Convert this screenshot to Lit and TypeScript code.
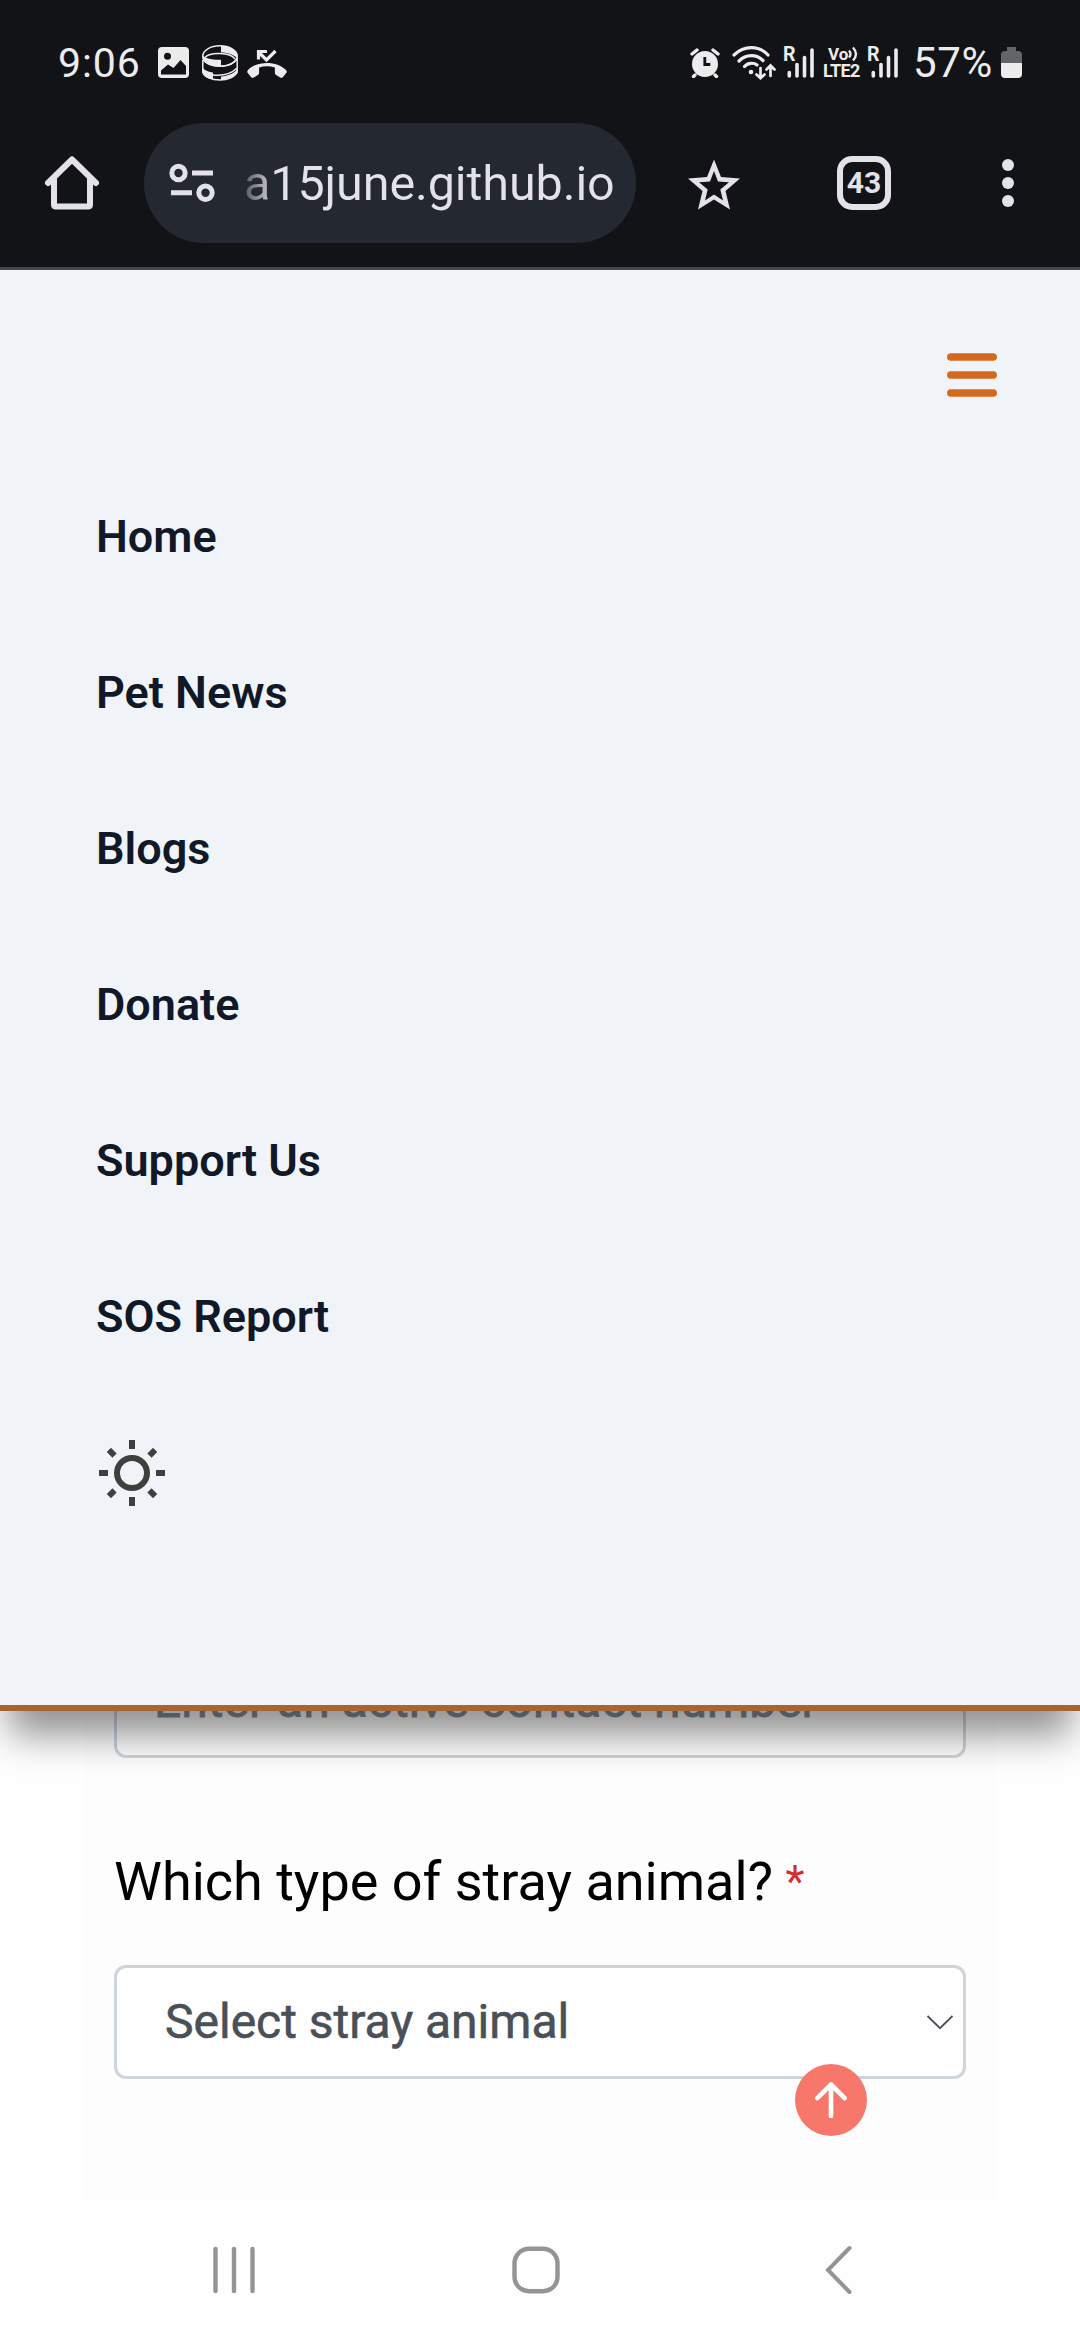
import { LitElement, html, css, svg } from "lit";
import { customElement } from "lit/decorators.js";

const signal = () => svg`
  <g stroke="#ececec" stroke-width="3.6" stroke-linecap="round">
    <path d="M5.3 25.500v3.500M13 17.500v11.500M20.500 10.500v18.500M28 3v26"/>
  </g>`;

@customElement("status-bar")
export class StatusBar extends LitElement {
  static styles = css`
    :host { display: flex; box-sizing: border-box; height: 99px; padding: 26px 58px 0 58px; align-items: center;
      justify-content: space-between; color: #ececec; font-family: Roboto, sans-serif; }
    svg { display: block; flex: none; }
    .side { display: flex; align-items: center; }
    .clock { font-size: 41px; line-height: 48px; width: 83px; letter-spacing: 0.9px; white-space: nowrap; }
    .picture { margin-left: 17px; }
    .ring { margin-left: 13px; }
    .missed { margin-left: 9px; }
    .wifi { margin-left: 12px; }
    .cell { position: relative; width: 30px; height: 32px; margin-left: 7px; }
    .roam { position: absolute; left: -1px; top: 0; font-size: 19.500px; line-height: 15px; font-weight: 700; }
    .volte { display: flex; flex-direction: column; width: 39px; margin-left: 9px; margin-right: -1px; font-weight: 700; }
    .vo { display: flex; font-size: 17px; line-height: 16px; padding-left: 5px; height: 16px; }
    .lte { font-size: 18px; line-height: 17px; letter-spacing: -0.7px; white-space: nowrap; }
    .percent { font-size: 42px; line-height: 48px; width: 82px; margin-left: 15px; margin-right: 1px; letter-spacing: 0.7px; white-space: nowrap; }
    .battery { margin-left: 5px; }
  `;
  render() {
    return html`
      <div class="side">
        <span class="clock">9:06</span>
        <svg class="picture" width="31" height="31" viewBox="0 0 31 31">
          <path fill="#ececec" fill-rule="evenodd" d="M4 0h23a4 4 0 0 1 4 4v23a4 4 0 0 1-4 4H4a4 4 0 0 1-4-4V4a4 4 0 0 1 4-4zM9.500 5.700a3.500 3.500 0 1 0 0 7a3.500 3.500 0 0 0 0-7zM3 23.500V27.500h25V19L22.500 13L15.500 21L10 17.500z"/>
        </svg>
        <svg class="ring" width="36" height="36" viewBox="0 0 36 36">
          <g fill="none" stroke="#ececec" stroke-width="1.500">
            <ellipse cx="18" cy="11" rx="17.200" ry="10.200"/>
            <path d="M3 12.500C8 7 28 7 33 14M19 21.300C27 21 33 18 35.200 13V27C33 32 26 35 18 35S2 32 .8 27V15M11 30C20 31 29 29 35 23"/>
          </g>
          <path fill="#ececec" d="M.5 10C2 13 9 15 19 14.800V22C9 22 1.500 18.500.5 14zM19 .8C28 1 35 5.500 35.500 11V14C33 10 26 7.500 19 7.500z"/>
          <path fill="#ececec" d="M.5 23C3 25.500 7 27 11 27.500V34.500C5 33.500 1 31 .5 27zM35.500 24V28C32 32 26 34 19 35V31.500C26 31 32 28.500 35.500 24z"/>
        </svg>
        <svg class="missed" width="40" height="32" viewBox="0 0 40 32">
          <path fill="none" stroke="#ececec" stroke-width="3.200" d="M28.500 4L19.500 13L11.500 5M11.500 12.500V4.500H20"/>
          <path fill="#ececec" d="M1 23C10 13.500 30 13.500 39 23c1 1.200 1 2 .2 3l-3.200 4c-.8 1-1.800 1-2.800.5l-4-2.500c-1-.6-1.300-1.200-1.300-2.200v-5.300c-5-1.600-10.800-1.600-15.800 0v5.300c0 1-.3 1.600-1.300 2.200l-4 2.500c-1 .5-2 .5-2.800-.5L.8 26c-.8-1-.8-1.800.2-3z"/>
        </svg>
      </div>
      <div class="side">
        <svg width="30" height="30" viewBox="0 0 30 30">
          <circle cx="15" cy="16" r="13" fill="#ececec"/>
          <path d="M2 6L7 2M28 6L23 2M5 27L3.500 28.500M25 27L26.500 28.500" stroke="#ececec" stroke-width="3.400" stroke-linecap="round"/>
          <path d="M14.800 9v7.500h5.500" fill="none" stroke="#121317" stroke-width="2.800"/>
        </svg>
        <svg class="wifi" width="45" height="34" viewBox="0 0 45 34">
          <g fill="none" stroke="#ececec" stroke-width="3.200" stroke-linecap="round">
            <path d="M2 9C12-.8 27-.8 36 9M7 15C14 8 24.500 8 31 14.500M12.500 20.500C16 16.500 22 16.500 25 19"/>
            <path d="M28.500 22V32M24.500 28.500L28.500 32.200L32.500 28.500M38.500 30V20.500M34.500 23.500L38.500 19.500L42.500 23.500" stroke-width="2.700"/>
          </g>
          <circle cx="19" cy="26" r="2.300" fill="#ececec"/>
        </svg>
        <div class="cell"><span class="roam">R</span><svg width="32" height="32" viewBox="0 0 32 32">${signal()}</svg></div>
        <div class="volte">
          <span class="vo">Vo<svg width="12" height="16" viewBox="0 0 12 16"><path fill="none" stroke="#ececec" stroke-width="2.300" d="M1 4.500q3 3.500 0 7M5 1.500q6 6.500 0 13"/></svg></span>
          <span class="lte">LTE2</span>
        </div>
        <div class="cell"><span class="roam">R</span><svg width="32" height="32" viewBox="0 0 32 32">${signal()}</svg></div>
        <span class="percent">57%</span>
        <svg class="battery" width="21" height="31" viewBox="0 0 21 31">
          <path fill="#636466" d="M6 0h9v4h2a4 4 0 0 1 4 4v8H0V8a4 4 0 0 1 4-4h2z"/>
          <path fill="#ececec" d="M0 16h21v11a4 4 0 0 1-4 4H4a4 4 0 0 1-4-4z"/>
        </svg>
      </div>`;
  }
}

@customElement("browser-toolbar")
export class BrowserToolbar extends LitElement {
  static styles = css`
    :host { display: flex; box-sizing: border-box; height: 171px; border-bottom: 3px solid #45464f; padding-left: 36px;
      align-items: center; font-family: Roboto, sans-serif; color: #e3e2e9; }
    svg { display: block; flex: none; }
    .pill { display: flex; align-items: center; box-sizing: border-box; width: 492px; height: 120px; margin-left: 36px;
      padding-left: 24px; border-radius: 60px; background: #242831; }
    .url { margin-left: 28px; padding-top: 2px; font-size: 48.500px; line-height: 60px; letter-spacing: -0.1px; white-space: nowrap;
      color: transparent; background: linear-gradient(90deg, #545760 0, #e3e2e9 32px); background-clip: text; -webkit-background-clip: text; }
    .star { margin-left: 42px; }
    .tabs { display: flex; box-sizing: border-box; align-items: center; justify-content: center; width: 54px; height: 54px;
      margin-left: 87px; border: 6px solid #e3e2e9; border-radius: 15px; font-size: 30px; line-height: 42px; font-weight: 700; }
    .dots { margin-left: 105px; }
  `;
  render() {
    return html`
      <svg width="72" height="72" viewBox="0 0 72 72" fill="none" stroke="#e3e2e9" stroke-width="6" stroke-linecap="round" stroke-linejoin="round">
        <path d="M12 36L36 12.500L60 36M18 31V57.500q0 2 2 2H52q2 0 2-2V31"/>
      </svg>
      <div class="pill">
        <svg width="48" height="42" viewBox="0 0 48 42" fill="none" stroke="#e3e2e9" stroke-width="5">
          <circle cx="10.500" cy="11" r="6.700"/><circle cx="37.500" cy="30.700" r="6.700"/>
          <path d="M24 11H45M3 30.700H24"/>
        </svg>
        <span class="url">a15june.github.io</span>
      </div>
      <svg class="star" width="72" height="72" viewBox="0 0 72 72">
        <path fill="#e3e2e9" fill-rule="evenodd" d="M36 12.500L43 30L62 31.500L47.500 44L52 62.500L36 52.500L20 62.500L24.500 44L10 31.500L29 30zM36 24L32 34.500L21 35.300L29.700 42.500L27 53.500L36 47.500L45 53.500L42.300 42.500L51 35.300L40 34.500z"/>
      </svg>
      <div class="tabs">43</div>
      <svg class="dots" width="24" height="54" viewBox="0 0 24 54" fill="#e3e2e9">
        <circle cx="12" cy="9" r="6"/><circle cx="12" cy="27" r="6"/><circle cx="12" cy="45" r="6"/>
      </svg>`;
  }
}

@customElement("nav-panel")
export class NavPanel extends LitElement {
  static styles = css`
    :host { display: flex; flex-direction: column; box-sizing: border-box; height: 1441px; background: #f0f4f9;
      border-bottom: 6px solid #aa6431; box-shadow: 0 33px 36px -9px rgba(0, 0, 0, 0.43); font-family: Roboto, sans-serif; }
    svg { display: block; }
    .top { display: flex; justify-content: flex-end; padding: 83px 83px 0 0; height: 106px; }
    .links { display: flex; flex-direction: column; }
    .link { padding-left: 96px; height: 156px; line-height: 156px; font-size: 45px; font-weight: 600; color: #111827; white-space: nowrap; }
    .theme { padding: 42px 0 0 96px; }
  `;
  links = ["Home", "Pet News", "Blogs", "Donate", "Support Us", "SOS Report"];
  render() {
    return html`
      <div class="top">
        <svg width="50" height="44" viewBox="0 0 50 44" stroke="#d2691e" stroke-width="7.500" stroke-linecap="round">
          <path d="M3.800 4H46.200M3.800 22H46.200M3.800 40H46.200"/>
        </svg>
      </div>
      <nav class="links">${this.links.map((l) => html`<a class="link">${l}</a>`)}</nav>
      <div class="theme">
        <svg width="72" height="72" viewBox="-36 -36 72 72" stroke="#3f3f3e" stroke-width="6" fill="none">
          <circle r="15"/>
          ${[0, 90, 180, 270].map((a) => svg`<g transform="rotate(${a})"><path d="M0-33V-24"/><path transform="rotate(45)" d="M0-32.700V-24.700"/></g>`)}
        </svg>
      </div>`;
  }
}

@customElement("report-form")
export class ReportForm extends LitElement {
  static styles = css`
    :host { display: block; box-sizing: border-box; width: 912px; height: 556px; margin: -67px auto 0; padding: 0 30px;
      background: #fdfdfd; font-family: Roboto, sans-serif; }
    .field { display: flex; align-items: center; box-sizing: border-box; height: 114px; border: 3px solid #ced4da; border-radius: 12px;
      background: #fefefe; font-size: 48px; line-height: 72px; white-space: nowrap; }
    .contact { padding-left: 37px; color: #868e96; -webkit-text-stroke: 0.8px #868e96; }
    .question { margin: 92px 0 51px; height: 64px; font-size: 54px; line-height: 64px; color: #000; white-space: nowrap; }
    .required { margin-left: -1px; font-size: 44px; line-height: 0; vertical-align: 3px; color: #d32f2f; }
    .select { justify-content: space-between; padding: 0 10px 0 48px; color: #495057; -webkit-text-stroke: 0.6px #495057; }
  `;
  render() {
    return html`
      <div class="field contact"><span class="hint">Enter an active contact number</span></div>
      <div class="question">Which type of stray animal? <span class="required">*</span></div>
      <div class="field select">
        <span class="value">Select stray animal</span>
        <svg width="27" height="16" viewBox="0 0 27 16" fill="none" stroke="#495057" stroke-width="1.800"><path d="M1.500 2L14 14.200L26.500 2"/></svg>
      </div>`;
  }
}

@customElement("system-nav")
export class SystemNav extends LitElement {
  static styles = css`
    :host { display: flex; box-sizing: border-box; height: 140px; padding: 0 226px 0 210px; background: #fefefe;
      align-items: center; }
    svg { display: block; flex: none; }
    .home { margin-left: 254px; }
    .back { margin-left: 265px; }
  `;
  render() {
    return html`
      <svg width="48" height="48" viewBox="0 0 48 48" stroke="#949494" stroke-width="4.400" stroke-linecap="round"><path d="M5.500 3V45M24 3V45M42.500 3V45"/></svg>
      <svg class="home" width="48" height="48" viewBox="0 0 48 48" fill="none" stroke="#949494" stroke-width="4.400"><rect x="2.500" y="2.800" width="43" height="42.400" rx="14.500"/></svg>
      <svg class="back" width="28" height="50" viewBox="0 0 28 50" fill="none" stroke="#949494" stroke-width="4" stroke-linecap="round"><path d="M24.500 3L3 25L24.500 47"/></svg>`;
  }
}

@customElement("app-root")
export class AppRoot extends LitElement {
  static styles = css`
    :host { display: block; width: 1080px; height: 2340px; overflow: hidden; background: #fff; }
    .chrome { background: #121317; }
    .page { position: relative; height: 1930px; overflow: hidden; background: #fefefe; }
    .panel { position: relative; z-index: 1; }
    .to-top { position: absolute; z-index: 2; left: 795px; top: 1794px; display: block; }
  `;
  render() {
    return html`
      <header class="chrome"><status-bar></status-bar><browser-toolbar></browser-toolbar></header>
      <main class="page">
        <nav-panel class="panel"></nav-panel>
        <report-form></report-form>
        <svg class="to-top" width="72" height="72" viewBox="0 0 72 72">
          <circle cx="36" cy="36" r="36" fill="#f8776b"/>
          <path d="M36 52V20.500M22.300 34.200L36 20.500L49.700 34.200" fill="none" stroke="#fff" stroke-width="4.600" stroke-linecap="round" stroke-linejoin="round"/>
        </svg>
      </main>
      <system-nav></system-nav>`;
  }
}
